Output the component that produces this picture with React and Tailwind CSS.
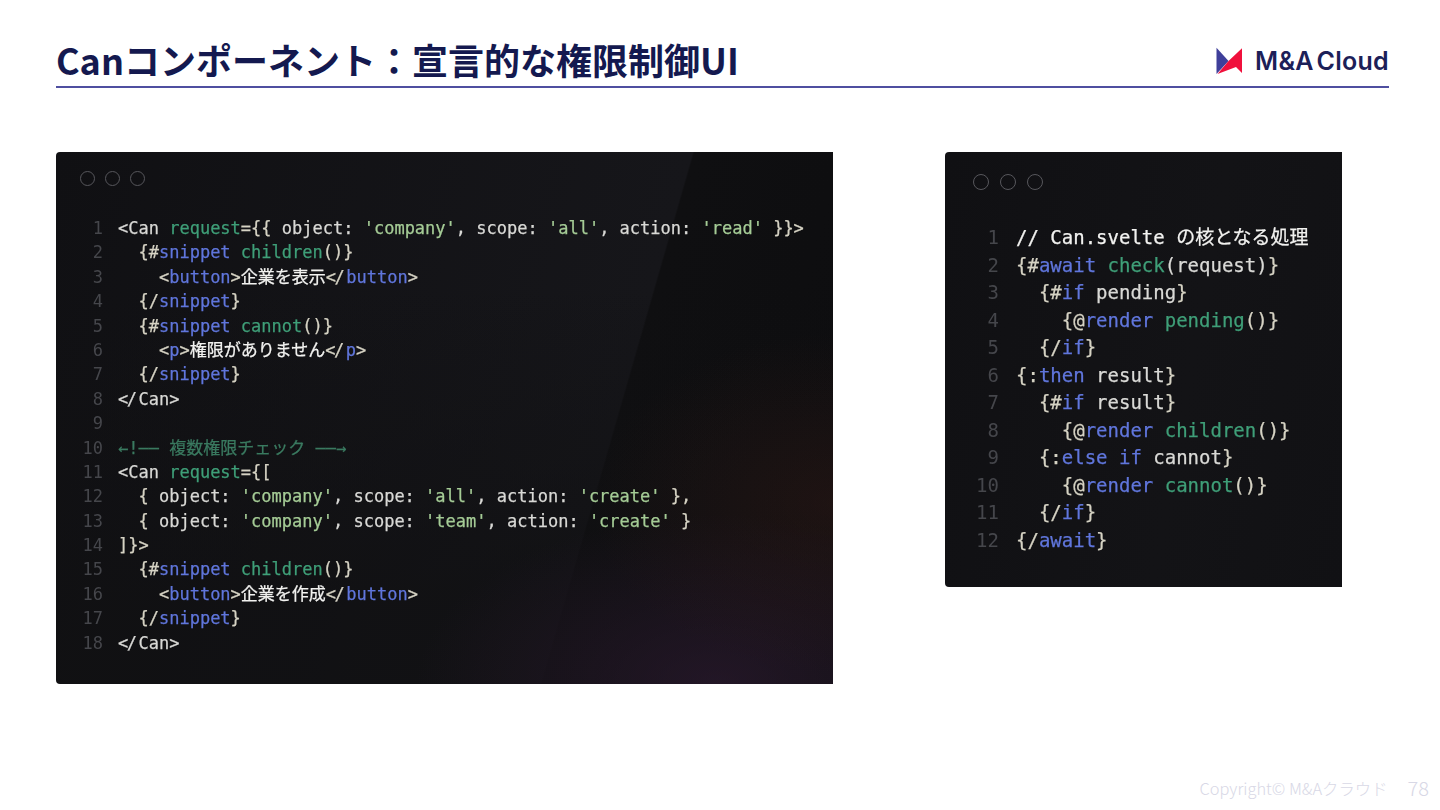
const K = "text-[#d6d3c4]";
const T = "text-[#d9d9d6]";
const W = "text-[#f2f2f0]";
const B = "text-[#6076dc]";
const G = "text-[#3f9f78]";
const S = "text-[#a5cc96]";
const C = "text-[#3a7a60]";

const closeK = [["text-[#d6d3c4] tracking-[-1.5px]", "<"], ["text-[#d6d3c4] tracking-[1.5px]", "/"]];
const closeT = [["text-[#d9d9d6] tracking-[-1.5px]", "<"], ["text-[#d9d9d6] tracking-[1.5px]", "/"]];

const left = [
  [[T, "<Can "], [G, "request"], [K, "={{ "], [T, "object: "], [S, "'company'"], [T, ", scope: "], [S, "'all'"], [T, ", action: "], [S, "'read'"], [K, " }}>"]],
  [[K, "  {#"], [B, "snippet"], [G, " children"], [K, "()}"]],
  [[K, "    <"], [B, "button"], [K, ">"], [W, "企業を表示"], ...closeK, [B, "button"], [K, ">"]],
  [[K, "  {/"], [B, "snippet"], [K, "}"]],
  [[K, "  {#"], [B, "snippet"], [G, " cannot"], [K, "()}"]],
  [[K, "    <"], [B, "p"], [K, ">"], [W, "権限がありません"], ...closeK, [B, "p"], [K, ">"]],
  [[K, "  {/"], [B, "snippet"], [K, "}"]],
  [...closeT, [T, "Can>"]],
  [],
  [[C, "←!—— 複数権限チェック ——→"]],
  [[T, "<Can "], [G, "request"], [K, "={["]],
  [[K, "  { "], [T, "object: "], [S, "'company'"], [T, ", scope: "], [S, "'all'"], [T, ", action: "], [S, "'create'"], [K, " },"]],
  [[K, "  { "], [T, "object: "], [S, "'company'"], [T, ", scope: "], [S, "'team'"], [T, ", action: "], [S, "'create'"], [K, " }"]],
  [[K, "]}>"]],
  [[K, "  {#"], [B, "snippet"], [G, " children"], [K, "()}"]],
  [[K, "    <"], [B, "button"], [K, ">"], [W, "企業を作成"], ...closeK, [B, "button"], [K, ">"]],
  [[K, "  {/"], [B, "snippet"], [K, "}"]],
  [...closeT, [T, "Can>"]],
];

const right = [
  [[W, "// Can.svelte の核となる処理"]],
  [[K, "{#"], [B, "await"], [G, " check"], [T, "(request)"], [K, "}"]],
  [[K, "  {#"], [B, "if"], [T, " pending"], [K, "}"]],
  [[K, "    {@"], [B, "render"], [G, " pending"], [K, "()}"]],
  [[K, "  {/"], [B, "if"], [K, "}"]],
  [[K, "{:"], [B, "then"], [T, " result"], [K, "}"]],
  [[K, "  {#"], [B, "if"], [T, " result"], [K, "}"]],
  [[K, "    {@"], [B, "render"], [G, " children"], [K, "()}"]],
  [[K, "  {:"], [B, "else if"], [T, " cannot"], [K, "}"]],
  [[K, "    {@"], [B, "render"], [G, " cannot"], [K, "()}"]],
  [[K, "  {/"], [B, "if"], [K, "}"]],
  [[K, "{/"], [B, "await"], [K, "}"]],
];

const mono = "font-['DejaVu_Sans_Mono','Noto_Sans_CJK_JP',monospace]";

function Dots({ cls }) {
  return (
    <div className={cls}>
      <span className="block size-full rounded-full border border-[#57575c]" />
      <span className="block size-full rounded-full border border-[#57575c]" />
      <span className="block size-full rounded-full border border-[#57575c]" />
    </div>
  );
}

function Code({ lines, rowCls, numCls }) {
  return (
    <div className="flex flex-col">
      {lines.map((toks, i) => (
        <div key={i} className={rowCls}>
          <span className={numCls}>{i + 1}</span>
          <span className="whitespace-pre [-webkit-text-stroke:0.25px]">
            {toks.map((t, j) => (
              <span key={j} className={t[0]}>{t[1]}</span>
            ))}
          </span>
        </div>
      ))}
    </div>
  );
}

export default function App() {
  return (
    <div className="relative flex h-[810px] w-[1440px] flex-col overflow-hidden bg-white font-['Noto_Sans_CJK_JP','Noto_Sans',sans-serif]">
      <header className="mr-[51px] ml-14 flex h-[88px] items-end justify-between border-b-2 border-[#4f4fa0] pb-[1px]">
        <h1 className="text-[36px] leading-[52px] font-bold text-[#14194f]">Canコンポーネント：宣言的な権限制御UI</h1>
        <div className="mb-[9px] flex items-center gap-[12px]">
          <svg width="27" height="28" viewBox="0 0 27 28">
            <path d="M0.5 0.7 L12.5 14 L0.5 27 Z" fill="#3f3f9a" />
            <path d="M26 1.3 L26 26 L20 20 L1.5 27 L12.5 14 Z" fill="#f0103c" />
          </svg>
          <span className="font-['Inter',sans-serif] text-[25px] leading-[30px] font-semibold tracking-[0.3px] [word-spacing:-4px] text-[#1c2058]">M&amp;A Cloud</span>
        </div>
      </header>

      <main className={`mt-[64px] flex items-start gap-[112px] px-14 ${mono}`}>
        <section className="h-[532px] w-[777px] shrink-0 rounded-tl-[4px] rounded-bl-[4px] bg-[radial-gradient(ellipse_240px_170px_at_100%_66%,rgba(60,28,22,0.35),transparent),radial-gradient(ellipse_300px_170px_at_85%_100%,rgba(50,28,55,0.55),transparent),linear-gradient(to_bottom,transparent_25%,rgba(16,16,18,0.75)_85%),linear-gradient(106deg,#101013_0%,#16161a_68.5%,#0f0f11_68.7%,#0d0d0f_100%)] pt-[19px] blur-[0.4px]">
          <Dots cls="ml-6 grid w-[65px] grid-cols-3 gap-[10px] [&>span]:h-[15px] [&>span]:w-[15px]" />
          <div className="mt-[30px]">
            <Code
              lines={left}
              rowCls="flex h-[24.4px] items-center text-[17px] leading-[24.4px]"
              numCls="mr-[15px] w-[47px] text-right text-[#45464b]"
            />
          </div>
        </section>

        <section className="h-[435px] w-[397px] shrink-0 rounded-tl-[4px] rounded-bl-[4px] bg-[linear-gradient(100deg,#101013,#131316_60%,#111114)] pt-[22px] blur-[0.4px]">
          <Dots cls="ml-[28px] grid w-[70px] grid-cols-3 gap-[11px] [&>span]:h-4 [&>span]:w-4" />
          <div className="mt-[34px]">
            <Code
              lines={right}
              rowCls="flex h-[27.55px] items-center text-[19px] leading-[27.55px]"
              numCls="mr-[17px] w-[54px] text-right text-[#45464b]"
            />
          </div>
        </section>
      </main>

      <footer className="mt-auto flex items-center justify-end gap-[20px] pr-[11px] pb-[10px] font-light text-[#d8d8e6]">
        <span className="text-[16.4px] leading-6">Copyright© M&amp;Aクラウド</span>
        <span className="text-[20px] leading-6">78</span>
      </footer>
    </div>
  );
}
